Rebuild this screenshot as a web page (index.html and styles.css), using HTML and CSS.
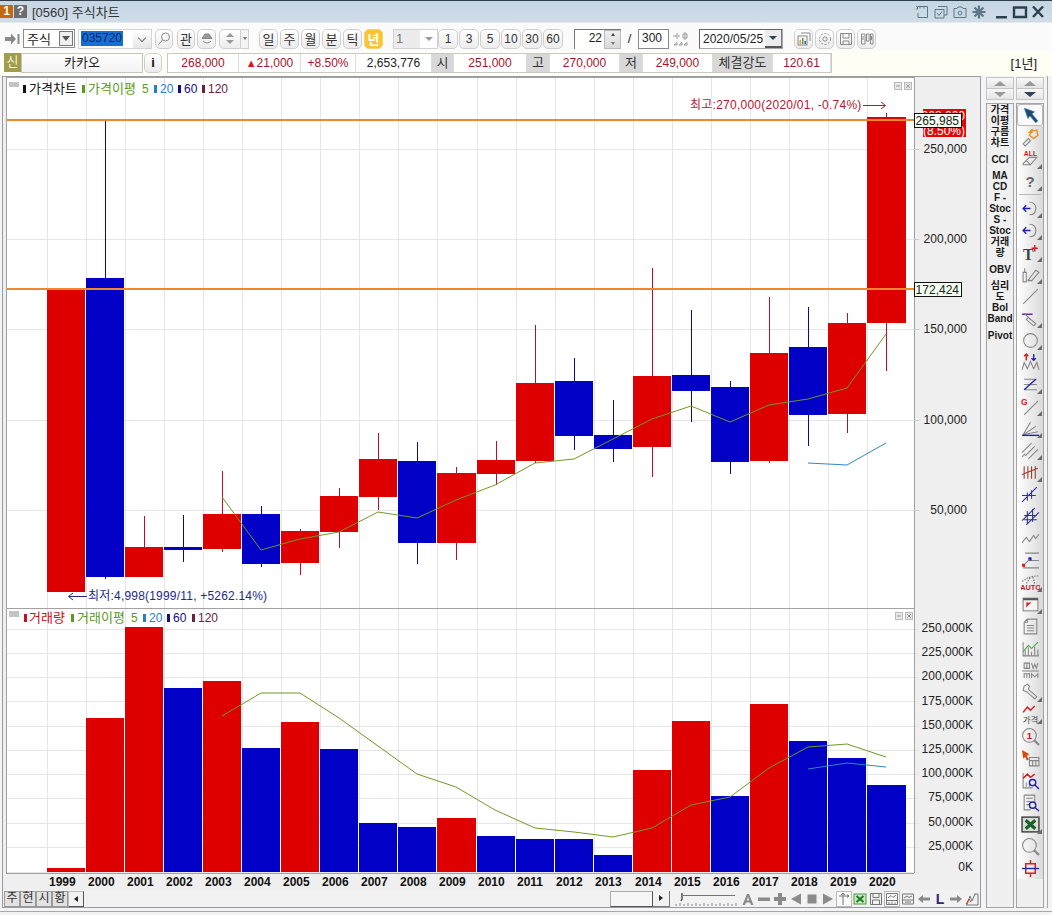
FILE: index.html
```html
<!DOCTYPE html>
<html lang="ko">
<head>
  <meta charset="UTF-8">
  <title>[0560] 주식차트</title>
  <link rel="stylesheet" href="styles.css">
</head>
<body>
<div class="window">

  <!-- title bar -->
  <div class="titlebar">
    <span class="num-badge">1</span>
    <span class="help-badge">?</span>
    <span class="title-text">[0560] 주식차트</span>
    <div class="title-tools">
      <svg class="tt" viewBox="0 0 14 14"><path d="M3 1.5H12.5V12.5H3V8M1 1.5H2.5V4H1M5 1.5V3.5M9 1.5V3.5"/></svg>
      <svg class="tt" viewBox="0 0 14 14"><path d="M4 1.5H13V10H10M1 4.5H10V13H1ZM3 8L5 10.5 8 6.5"/></svg>
      <svg class="tt" viewBox="0 0 14 14"><path d="M1 3.5H4L5 2H9L10 3.5H13V12.5H1Z"/><circle cx="7" cy="8" r="2"/></svg>
      <svg class="tt gear" viewBox="0 0 14 14"><path d="M7 0.5V13.5M0.5 7H13.5M2.5 2.5L11.5 11.5M11.5 2.5L2.5 11.5"/></svg>
    </div>
    <div class="win-ctrl">
      <svg class="wc" viewBox="0 0 16 16"><rect x="2" y="12" width="11" height="2.5"/></svg>
      <svg class="wc" viewBox="0 0 16 16"><path class="wc-line" d="M2 3.5H14V13H2Z"/></svg>
      <svg class="wc" viewBox="0 0 16 16"><path class="wc-line" d="M3 2.5L13 13M13 2.5L3 13"/></svg>
    </div>
  </div>

  <!-- toolbar -->
  <div class="toolbar">
    <svg class="send-icon" viewBox="0 0 15 14"><path d="M0 5H6V1.5L11 7 6 12.5V9H0Z"/><rect x="12.5" y="2" width="2" height="10"/></svg>
    <div class="combo market"><span>주식</span><i class="combo-arrow"></i></div>
    <div class="code-box"><span class="code-sel">035720</span><i class="code-arrow"></i></div>
    <button class="btn w18 ml3"><svg class="bi" viewBox="0 0 14 14"><circle cx="8.5" cy="5" r="4"/><path d="M5.5 8L1.5 12.5"/></svg></button>
    <button class="btn w18 ml4">관</button>
    <button class="btn w19 ml2 round-grey"><svg class="bi" viewBox="0 0 14 14"><path class="fill-grey" d="M2 6.5H12L9 2H5Z"/><path d="M3 9Q7 13 11 9"/></svg></button>
    <div class="updown ml3"><i class="tri-up"></i><i class="tri-dn"></i></div>
    <div class="mini-dd"><i class="tri-dn small"></i></div>

    <div class="period ml10">
      <button class="btn w19">일</button>
      <button class="btn w19">주</button>
      <button class="btn w19">월</button>
      <button class="btn w19">분</button>
      <button class="btn w19">틱</button>
      <button class="btn w19 active">년</button>
    </div>

    <div class="unit-select ml10"><span>1</span><i class="tri-dn"></i></div>
    <div class="minutes">
      <button class="btn w20">1</button>
      <button class="btn w20">3</button>
      <button class="btn w20">5</button>
      <button class="btn w20">10</button>
      <button class="btn w20">30</button>
      <button class="btn w20">60</button>
    </div>

    <div class="spin ml11"><span class="spin-val">22</span><div class="spin-btns"><i class="tri-up small"></i><i class="tri-dn small"></i></div></div>
    <span class="slash">/</span>
    <div class="count-box">300</div>
    <svg class="count-icon" viewBox="0 0 16 16"><path d="M1 5H5M5 2V8M8 5H6M11 3H15V7H11ZM13 1V9M2 14L5 11.5V14ZM7 14L10 11.5V14ZM12 14L15 11.5V14Z"/></svg>
    <div class="date-box ml11"><span>2020/05/25</span><b class="date-arrow"><i class="tri-dn dark"></i></b></div>

    <button class="btn w19 ml11"><svg class="bi" viewBox="0 0 14 14"><path d="M4 1H13V9"/><rect x="1" y="4" width="9" height="9"/><rect class="b-o" x="2.5" y="8" width="1.5" height="4"/><rect class="b-g" x="5" y="6" width="1.5" height="6"/><rect class="b-b" x="7.5" y="9" width="1.5" height="3"/></svg></button>
    <button class="btn w19 ml2"><svg class="bi" viewBox="0 0 14 14"><circle cx="7" cy="7" r="2.2"/><circle cx="7" cy="7" r="5.5" stroke-dasharray="2 1.5"/></svg></button>
    <button class="btn w19 ml2"><svg class="bi" viewBox="0 0 14 14"><path d="M1.5 1.5H12.5V12.5H1.5ZM4 1.5V6H10V1.5M4 12.5V9H10V12.5"/></svg></button>
    <button class="btn w19 ml2"><svg class="bi" viewBox="0 0 14 14"><path d="M1.5 2H5V12H1.5ZM6.5 2H9V9H6.5ZM10.5 2H13V12H10.5ZM3 4V8M11.5 4V8"/></svg></button>
  </div>

  <!-- stock info row -->
  <div class="infobar">
    <span class="shin">신</span>
    <div class="stock-name">카카오</div>
    <button class="btn info-btn">i</button>
    <div class="quote">
      <span class="up">268,000</span>
      <span class="up"><em class="tri-red">▲</em>21,000</span>
      <span class="up">+8.50%</span>
      <span>2,653,776</span>
      <span class="lbl">시</span>
      <span class="up">251,000</span>
      <span class="lbl">고</span>
      <span class="up">270,000</span>
      <span class="lbl">저</span>
      <span class="up">249,000</span>
      <span class="lbl">체결강도</span>
      <span class="up">120.61</span>
    </div>
    <span class="range">[1년]</span>
  </div>

  <div class="content">
    <div class="frame">
      <svg class="chart" width="974" height="813" viewBox="6 77 974 813">
        <!-- panels -->
        <rect class="plot" x="7" y="78" width="907" height="530"/>
        <rect class="plot" x="7" y="609" width="907" height="264"/>

        <!-- grid -->
        <path class="grid" d="M47.5 78V873M86.5 78V876M125.5 78V876M164.5 78V876M203.5 78V876M242.5 78V876M281.5 78V876M320.5 78V876M359.5 78V876M398.5 78V876M437.5 78V876M477.5 78V876M516.5 78V876M555.5 78V876M594.5 78V876M633.5 78V876M672.5 78V876M711.5 78V876M750.5 78V876M789.5 78V876M828.5 78V876M867.5 78V876"/>
        <path class="grid" d="M7 149.5H919M7 239.5H919M7 329.5H919M7 420.5H919M7 510.5H919"/>
        <path class="grid" d="M7 629.5H919M7 653.5H919M7 677.5H919M7 701.5H919M7 726.5H919M7 750.5H919M7 774.5H919M7 798.5H919M7 823.5H919M7 847.5H919M7 872.5H919"/>
        <path class="frame-line" d="M6.5 77V873M6 77.5H914M6 608.5H914M914.5 77V873M6 873.5H914"/>

        <!-- price wicks -->
        <path class="wick-up" d="M144.5 516V547M222.5 471V552M300.5 529V575M339.5 488V548M378.5 433V510M456.5 467V560M496.5 441V485M535.5 325V463M652.5 268V477M769.5 297V463M847.5 313V433M886.5 113V371"/>
        <path class="wick-dn" d="M105.5 121V579M183.5 515V562M261.5 506V567M417.5 442V564M574.5 358V450M613.5 400V462M691.5 310V422M730.5 381V474M808.5 307V446"/>

        <!-- price candles -->
        <g class="up">
          <rect x="47" y="289" width="38" height="303"/>
          <rect x="125" y="547" width="38" height="30"/>
          <rect x="203" y="514" width="38" height="35"/>
          <rect x="281" y="531" width="38" height="32"/>
          <rect x="320" y="496" width="38" height="36"/>
          <rect x="359" y="459" width="38" height="38"/>
          <rect x="437" y="473" width="39" height="70"/>
          <rect x="477" y="460" width="38" height="14"/>
          <rect x="516" y="383" width="38" height="78"/>
          <rect x="633" y="376" width="38" height="71"/>
          <rect x="750" y="353" width="38" height="108"/>
          <rect x="828" y="323" width="38" height="91"/>
          <rect x="867" y="117" width="39" height="206"/>
        </g>
        <g class="dn">
          <rect x="86" y="278" width="38" height="299"/>
          <rect x="164" y="547" width="38" height="3"/>
          <rect x="242" y="514" width="38" height="50"/>
          <rect x="398" y="461" width="38" height="82"/>
          <rect x="555" y="381" width="38" height="55"/>
          <rect x="594" y="435" width="38" height="14"/>
          <rect x="672" y="375" width="38" height="16"/>
          <rect x="711" y="387" width="38" height="75"/>
          <rect x="789" y="347" width="38" height="68"/>
        </g>

        <!-- price moving averages -->
        <polyline class="ma5" points="222,497 261,550 300,539 339,532 378,512 417,518 456,500 495,485 535,463 574,459 613,439 652,419 691,406 730,422 769,405 808,399 847,388 886,334"/>
        <polyline class="ma20" points="808,463 847,465 886,443"/>

        <!-- volume bars -->
        <g class="up">
          <rect x="47" y="868" width="38" height="4"/>
          <rect x="86" y="718" width="38" height="154"/>
          <rect x="125" y="627" width="38" height="245"/>
          <rect x="203" y="681" width="38" height="191"/>
          <rect x="281" y="722" width="38" height="150"/>
          <rect x="437" y="818" width="39" height="54"/>
          <rect x="633" y="770" width="38" height="102"/>
          <rect x="672" y="721" width="38" height="151"/>
          <rect x="750" y="704" width="38" height="168"/>
        </g>
        <g class="dn">
          <rect x="164" y="688" width="38" height="184"/>
          <rect x="242" y="748" width="38" height="124"/>
          <rect x="320" y="749" width="38" height="123"/>
          <rect x="359" y="823" width="38" height="49"/>
          <rect x="398" y="827" width="38" height="45"/>
          <rect x="477" y="836" width="38" height="36"/>
          <rect x="516" y="839" width="38" height="33"/>
          <rect x="555" y="839" width="38" height="33"/>
          <rect x="594" y="855" width="38" height="17"/>
          <rect x="711" y="796" width="38" height="76"/>
          <rect x="789" y="741" width="38" height="131"/>
          <rect x="828" y="758" width="38" height="114"/>
          <rect x="867" y="785" width="39" height="87"/>
        </g>
        <polyline class="ma5" points="222,716 261,693 300,693 339,718 378,746 417,774 456,787 495,810 535,828 574,832 613,837 652,828 691,805 730,797 769,768 808,747 847,744 886,757"/>
        <polyline class="ma20" points="808,769 847,763 886,767"/>

        <!-- axis ticks -->
        <path class="tick" d="M914 149.5H919M914 239.5H919M914 329.5H919M914 420.5H919M914 510.5H919"/>

        <!-- current price tag behind support lines -->
        <rect class="now-tag" x="923" y="109" width="43" height="28"/>
        <text class="t-now" x="965" y="120">268,000</text>
        <text class="t-now" x="965" y="135">(8.50%)</text>

        <!-- trend lines -->
        <rect class="trend" x="7" y="119" width="908" height="2"/>
        <rect class="trend" x="7" y="288" width="908" height="2"/>
        <rect class="line-tag" x="914.5" y="113.5" width="47" height="14"/>
        <text class="t-axis" x="959" y="125">265,985</text>
        <rect class="line-tag" x="914.5" y="282.5" width="47" height="14"/>
        <text class="t-axis" x="959" y="294">172,424</text>

        <!-- price axis -->
        <text class="t-axis" x="967" y="153">250,000</text>
        <text class="t-axis" x="967" y="243">200,000</text>
        <text class="t-axis" x="967" y="333">150,000</text>
        <text class="t-axis" x="967" y="424">100,000</text>
        <text class="t-axis" x="967" y="514">50,000</text>

        <!-- volume axis -->
        <text class="t-axis" x="973" y="632">250,000K</text>
        <text class="t-axis" x="973" y="656">225,000K</text>
        <text class="t-axis" x="973" y="680">200,000K</text>
        <text class="t-axis" x="973" y="705">175,000K</text>
        <text class="t-axis" x="973" y="729">150,000K</text>
        <text class="t-axis" x="973" y="753">125,000K</text>
        <text class="t-axis" x="973" y="777">100,000K</text>
        <text class="t-axis" x="973" y="801">75,000K</text>
        <text class="t-axis" x="973" y="826">50,000K</text>
        <text class="t-axis" x="973" y="850">25,000K</text>
        <text class="t-axis" x="973" y="871">0K</text>

        <!-- years -->
        <g class="t-year">
          <text x="49" y="886">1999</text><text x="88" y="886">2000</text><text x="127" y="886">2001</text>
          <text x="166" y="886">2002</text><text x="205" y="886">2003</text><text x="244" y="886">2004</text>
          <text x="283" y="886">2005</text><text x="322" y="886">2006</text><text x="361" y="886">2007</text>
          <text x="400" y="886">2008</text><text x="439" y="886">2009</text><text x="478" y="886">2010</text>
          <text x="517" y="886">2011</text><text x="556" y="886">2012</text><text x="595" y="886">2013</text>
          <text x="635" y="886">2014</text><text x="674" y="886">2015</text><text x="713" y="886">2016</text>
          <text x="752" y="886">2017</text><text x="791" y="886">2018</text><text x="830" y="886">2019</text>
          <text x="869" y="886">2020</text>
        </g>

        <!-- high / low notes -->
        <text class="t-high" x="690" y="109">최고:270,000(2020/01, -0.74%)</text>
        <path class="arr-high" d="M863 105.5H885M881 102L885.5 105.5 881 109"/>
        <path class="arr-low" d="M87 596.5H69M73 593L68.5 596.5 73 600"/>
        <text class="t-low" x="88" y="600">최저:4,998(1999/11, +5262.14%)</text>

        <!-- price legend -->
        <rect class="pane-grip" x="9" y="82" width="10" height="5"/>
        <rect class="c-black" x="23" y="85" width="3" height="8"/>
        <text class="t-leg c-black" x="29" y="93">가격차트</text>
        <rect class="c-green" x="82" y="85" width="3" height="8"/>
        <text class="t-leg c-green" x="88" y="93">가격이평</text>
        <text class="t-num c-green" x="142" y="93">5</text>
        <rect class="c-sky" x="154" y="85" width="3" height="8"/>
        <text class="t-num c-sky" x="160" y="93">20</text>
        <rect class="c-navy" x="178" y="85" width="3" height="8"/>
        <text class="t-num c-navy" x="184" y="93">60</text>
        <rect class="c-plum" x="202" y="85" width="3" height="8"/>
        <text class="t-num c-plum" x="208" y="93">120</text>

        <!-- volume legend -->
        <rect class="pane-grip" x="9" y="611" width="10" height="6"/>
        <rect class="c-red" x="24" y="614" width="3" height="8"/>
        <text class="t-leg c-red" x="29" y="622">거래량</text>
        <rect class="c-green" x="71" y="614" width="3" height="8"/>
        <text class="t-leg c-green" x="77" y="622">거래이평</text>
        <text class="t-num c-green" x="131" y="622">5</text>
        <rect class="c-sky" x="143" y="614" width="3" height="8"/>
        <text class="t-num c-sky" x="149" y="622">20</text>
        <rect class="c-navy" x="167" y="614" width="3" height="8"/>
        <text class="t-num c-navy" x="173" y="622">60</text>
        <rect class="c-plum" x="192" y="614" width="3" height="8"/>
        <text class="t-num c-plum" x="198" y="622">120</text>

        <!-- pane buttons -->
        <g class="pane-btn"><rect x="894.5" y="82.5" width="7" height="7"/><path d="M896 86H900"/><rect x="904.5" y="82.5" width="7" height="7"/><path d="M906 84L910 88M910 84L906 88"/></g>
        <g class="pane-btn"><rect x="895.5" y="612.5" width="7" height="7"/><path d="M897 616H901"/><rect x="905.5" y="612.5" width="7" height="7"/><path d="M907 614L911 618M911 614L907 618"/></g>
      </svg>

      <!-- bottom strip -->
      <div class="bottom-bar">
        <div class="tabs">
          <span class="tab">주</span><span class="tab">현</span><span class="tab">시</span><span class="tab">황</span>
          <span class="tab-arrow"><i class="tri-left"></i></span>
        </div>
        <div class="scroll-box"></div>
        <div class="scroll-btn"><i class="tri-right"></i></div>
        <svg class="zoom-slider" width="62" height="16" viewBox="0 0 62 16">
          <path d="M8 4.5H60" class="sl-rail"/>
          <path d="M7 2V8L6 10" class="sl-knob"/>
          <path d="M1 15V13M5 15V12M9 15V13M13 15V12M17 15V13M21 15V12M25 15V13M29 15V12M33 15V13M37 15V12M41 15V13M45 15V12M49 15V13M53 15V12M57 15V13M61 15V12" class="sl-scale"/>
        </svg>
        <div class="bar-icons">
          <svg class="bbi" viewBox="0 0 14 14"><path class="f-grey" d="M6 2H8L12.5 13H10L9 10.5H5L4 13H1.5ZM7 5L5.8 8.5H8.2Z"/></svg>
          <svg class="bbi" viewBox="0 0 14 14"><rect class="f-grey" x="1" y="5.5" width="12" height="3.5"/></svg>
          <svg class="bbi" viewBox="0 0 14 14"><path class="f-grey" d="M5 1H9V5H13V9H9V13H5V9H1V5H5Z"/></svg>
          <svg class="bbi" viewBox="0 0 14 14"><path class="f-grey" d="M12 1.5V12.5L2 7Z"/></svg>
          <svg class="bbi" viewBox="0 0 14 14"><rect class="f-grey" x="2.5" y="2.5" width="9" height="9"/></svg>
          <svg class="bbi" viewBox="0 0 14 14"><path class="f-grey" d="M2 1.5V12.5L12 7Z"/></svg>
          <svg class="bbi boxed" viewBox="0 0 14 14"><path class="s-grey" d="M6 1V13M2 4H12M6 1L4 3M6 1L8 3M12 4L10 2.5M12 4L10 5.5"/></svg>
          <svg class="bbi" viewBox="0 0 14 14"><rect class="xl-bg" x="1" y="2" width="12" height="10"/><path class="xl-x" d="M3.5 4L10.5 10M10.5 4L3.5 10"/></svg>
          <svg class="bbi" viewBox="0 0 14 14"><path class="s-grey" d="M1.5 1.5H12.5V12.5H1.5ZM4 1.5V5.5H10V1.5M3.5 8H10.5V12.5H3.5Z"/></svg>
          <svg class="bbi boxed" viewBox="0 0 14 14"><path class="s-grey" d="M1.5 1.5H12.5V12.5H1.5ZM1.5 8.5H12.5M3 6L6 3.5 8 5.5 11 3M4 12V10M7 12V9.5M10 12V10.5"/></svg>
          <svg class="bbi" viewBox="0 0 14 14"><path class="s-grey" d="M1.5 2H12.5V12H1.5ZM1.5 8H12.5M3 6L6 4 8 5.5 11 4M4 10H10"/></svg>
          <svg class="bbi" viewBox="0 0 14 14"><path class="f-grey" d="M1 7L6 3V5.5H13V8.5H6V11Z"/></svg>
          <span class="bbi l-mark">L</span>
          <svg class="bbi" viewBox="0 0 14 14"><path class="f-grey" d="M13 7L8 3V5.5H1V8.5H8V11Z"/></svg>
          <svg class="bbi" viewBox="0 0 14 14"><path class="s-grey" d="M1 13H13M2 13L5 4 7 9 10 2M9 2H13V13"/><path class="s-red" d="M1 12L4 7 6 10"/></svg>
        </div>
      </div>
    </div>

    <!-- right side panels -->
    <div class="side-col study-col">
      <div class="side-scroll">
        <span class="sc-btn"><i class="tri-up"></i></span>
        <span class="sc-btn"><i class="tri-dn"></i></span>
      </div>
      <div class="side-list">
        <div class="study">가격<br>이평</div>
        <div class="study">구름<br>차트</div>
        <div class="study">CCI</div>
        <div class="study">MA<br>CD</div>
        <div class="study">F -<br>Stoc</div>
        <div class="study">S -<br>Stoc</div>
        <div class="study">거래<br>량</div>
        <div class="study">OBV</div>
        <div class="study">심리<br>도</div>
        <div class="study">Bol<br>Band</div>
        <div class="study">Pivot</div>
      </div>
    </div>

    <div class="side-col tool-col">
      <div class="side-scroll">
        <span class="sc-btn"><i class="tri-up"></i></span>
        <span class="sc-btn"><i class="tri-dn dark"></i></span>
      </div>
      <div class="side-list tools">
        <div class="tool pressed"><svg viewBox="0 0 18 18"><path class="f-teal" d="M3 2L13 5.5 10.5 7.5 16 14 14 16 8.5 9.5 6.5 12Z"/></svg></div>
        <div class="tool"><svg viewBox="0 0 18 18"><path class="s-orange" d="M10 3L15 2 16 7 12 10 8 7ZM11 1L8 4 11 4"/><path class="s-dk" d="M2 15L7 10 9 12 4 17Z"/></svg></div>
        <div class="tool more"><svg viewBox="0 0 18 18"><text class="t-all" x="9" y="5.5">ALL</text><path class="s-dk" d="M2 13L8 7H15L9 14H2ZM5 10L9 14"/></svg></div>
        <div class="tool more"><span class="q-mark">?</span></div>
        <div class="tool-sep"></div>
        <div class="tool more"><svg viewBox="0 0 18 18"><path class="s-dk" d="M8 3Q14 3 14 9T8 15"/><path class="s-navy2" d="M2 9H9M5 6L2 9 5 12"/></svg></div>
        <div class="tool more"><svg viewBox="0 0 18 18"><path class="s-dk" d="M8 3Q14 3 14 9T8 15"/><path class="s-navy2" d="M2 9H9M5 6L2 9 5 12"/></svg></div>
        <div class="tool more"><svg viewBox="0 0 18 18"><text class="t-serif" x="2" y="16">T</text><path class="s-red2" d="M10 5H16M13 2V8"/></svg></div>
        <div class="tool more"><svg viewBox="0 0 18 18"><path class="s-dk" d="M2 7H5V16H2ZM3.5 3V7M7 14L14 5 17 7 10 15ZM6 15H11"/></svg></div>
        <div class="tool"><svg viewBox="0 0 18 18"><path class="s-dk" d="M2 16L16 2"/></svg></div>
        <div class="tool more"><svg viewBox="0 0 18 18"><path class="s-purple" d="M1 5H11"/><path class="s-dk" d="M7 8L14 14 12 16 5 10ZM3 4L9 10"/></svg></div>
        <div class="tool more"><svg viewBox="0 0 18 18"><circle class="s-dk" cx="9" cy="9" r="6.5"/></svg></div>
        <div class="tool"><svg viewBox="0 0 18 18"><path class="s-dk" d="M1 16L3 9 6 15 9 8 12 15 15 9 17 16"/><path class="s-red2" d="M5 1V7M3 3L5 1 7 3"/><path class="s-navy2" d="M12 1V7M10 5L12 7 14 5"/></svg></div>
        <div class="tool more"><svg viewBox="0 0 18 18"><path class="s-dk" d="M3 4H15M3 9H15M3 14H15"/><path class="s-navy2" d="M3 14L14 4"/></svg></div>
        <div class="tool more"><svg viewBox="0 0 18 18"><path class="s-dk" d="M3 17L16 4"/><text class="t-g" x="0" y="8">G</text></svg></div>
        <div class="tool more"><svg viewBox="0 0 18 18"><path class="s-dk" d="M2 15L9 3M2 15L14 7M2 15L16 12"/><path class="s-navy2" d="M1 15.5H17"/></svg></div>
        <div class="tool more"><svg viewBox="0 0 18 18"><path class="s-dk" d="M1 11L10 2M4 14L13 5M7 17L16 8M1 15L4 12"/></svg></div>
        <div class="tool more"><svg viewBox="0 0 18 18"><path class="s-brown" d="M3 3V15M6.5 3V15M10 3V15M13.5 3V15M1 11L16 5"/></svg></div>
        <div class="tool"><svg viewBox="0 0 18 18"><path class="s-navy3" d="M1 16L15 2M1 10L14 10M6 7V15M10 5V13"/></svg></div>
        <div class="tool"><svg viewBox="0 0 18 18"><path class="s-navy3" d="M1 13L13 1M5 17L17 5M3 8H15M3 12H15M6 4V16M11 2V14"/></svg></div>
        <div class="tool"><svg viewBox="0 0 18 18"><path class="s-dk" d="M1 13L5 8 8 12 12 6 14 9 17 5"/></svg></div>
        <div class="tool"><svg viewBox="0 0 18 18"><path class="s-dk" d="M4 2H17M7 9H17M2 16H17"/><rect class="f-navy" x="7" y="6" width="3" height="3"/><rect class="f-red" x="1" y="12" width="3" height="3"/><path class="s-dk" d="M4 12L8 8"/></svg></div>
        <div class="tool more"><svg viewBox="0 0 18 18"><path class="s-dots" d="M1 8Q9 2 17 3M5 10L9 4M13 10L11 3"/><text class="t-auto" x="9" y="16">AUTO</text></svg></div>
        <div class="tool more"><svg viewBox="0 0 18 18"><rect class="f-lt s-dk" x="2" y="3" width="14" height="12"/><rect class="f-dk" x="2" y="3" width="14" height="2"/><path class="f-red" d="M5 7H10L7 9.5 5 12Z"/></svg></div>
        <div class="tool"><svg viewBox="0 0 18 18"><path class="s-dk" d="M6 2H15V16H3V5ZM6 2V5H3M5.5 8H12.5M5.5 10.5H12.5M5.5 13H12.5"/></svg></div>
        <div class="tool"><svg viewBox="0 0 18 18"><path class="s-dk" d="M2 3V16H17M4 16V11M7 16V8M10 16V12M13 16V7M16 16V10"/><path class="s-green2" d="M2 12L7 6 10 9 16 3"/></svg></div>
        <div class="tool"><svg viewBox="0 0 18 18"><path class="s-dk" d="M3 2H8V7H3ZM5.5 2V7M10 2L11.5 7 13 3 14.5 7 16 2M1 9.5H17M3 16V12H8V16M5.5 12V16M10 16V12L13 15 16 12V16"/></svg></div>
        <div class="tool more"><svg viewBox="0 0 18 18"><path class="s-dk" d="M3 3L6 1 8 3 7 6 15 13 13 15 5 8 2 7Z"/></svg></div>
        <div class="tool more"><svg viewBox="0 0 18 18"><path class="s-red2" d="M2 7L6 2 9 5 13 1"/><text class="t-ga" x="9" y="17">가격</text></svg></div>
        <div class="tool"><svg viewBox="0 0 18 18"><circle class="s-dk" cx="8" cy="8" r="6.5"/><path class="s-dk2" d="M12.5 12.5L17 17"/><text class="t-one" x="8" y="11.5">1</text></svg></div>
        <div class="tool"><svg viewBox="0 0 18 18"><path class="f-cursor" d="M1 1L8 5 5.5 6.5 7.5 10 5.5 11 4 7.5 2 9Z"/><path class="s-dk" d="M8 8H17V16H8ZM8 11H17M11 11V16M14 11V16"/></svg></div>
        <div class="tool"><svg viewBox="0 0 18 18"><path class="s-dk" d="M2 2V16H11M5 15V11M8 15V9"/><path class="s-red2" d="M2 7L6 3 9 6 13 3"/><circle class="s-navy2" cx="11" cy="11" r="3"/><path class="s-navy2" d="M13 13L17 17"/></svg></div>
        <div class="tool"><svg viewBox="0 0 18 18"><path class="s-dk" d="M3 2H13V9M3 2V16H9M5 5H11M5 8H9M5 11H8"/><circle class="s-navy2" cx="11" cy="11.5" r="3"/><path class="s-navy2" d="M13 13.5L17 17"/></svg></div>
        <div class="tool more"><svg viewBox="0 0 18 18"><rect class="xl-frame" x="1" y="2" width="16" height="14"/><path class="xl-big" d="M4.5 5L13.5 13M13.5 5L4.5 13"/></svg></div>
        <div class="tool"><svg viewBox="0 0 18 18"><circle class="s-dk" cx="8" cy="8" r="6.5"/><path class="s-dk2" d="M12.5 12.5L17 17"/></svg></div>
        <div class="tool"><svg viewBox="0 0 18 18"><rect class="s-red2" x="4.5" y="4.5" width="9" height="9"/><path class="s-red2" d="M9 1V4.5M9 13.5V17"/><path class="s-navy2" d="M1 9H17"/></svg></div>
      </div>
    </div>
    <div class="side-edge"></div>
  </div>
</div>
</body>
</html>
```

FILE: styles.css
```css
* {
  box-sizing: border-box;
}

body {
  margin: 0;
  background-color: #f4f4f4;
  font-family: "Liberation Sans", "Noto Sans CJK KR", sans-serif;
  font-size: 12px;
  color: #222;
}

button {
  font-family: inherit;
  padding: 0;
}

i {
  display: block;
}

.window {
  width: 1052px;
  height: 915px;
  overflow: hidden;
  border-top: 1px solid #2f3d49;
}

/* title bar */
.titlebar {
  height: 21px;
  display: flex;
  align-items: center;
  background: linear-gradient(#c6d5e2, #d0dde9);
}

.num-badge,
.help-badge {
  width: 13px;
  height: 13px;
  color: #fff;
  font-weight: bold;
  font-size: 12px;
  line-height: 13px;
  text-align: center;
}

.num-badge { background-color: #c46a0e; }
.help-badge { background-color: #6d6d6d; margin-left: 1px; }

.title-text {
  margin-left: 5px;
  font-size: 13px;
  color: #333;
}

.title-tools {
  margin-left: auto;
  display: flex;
  gap: 5px;
  margin-right: 8px;
}

.tt {
  width: 14px;
  height: 14px;
  fill: none;
  stroke: #5d7688;
  stroke-width: 1;
}

.tt.gear {
  stroke-width: 2.2;
}

.win-ctrl {
  display: flex;
  gap: 2px;
  margin-right: 6px;
}

.wc {
  width: 16px;
  height: 16px;
  fill: #2c3f4f;
}

.wc-line {
  fill: none;
  stroke: #2c3f4f;
  stroke-width: 2.4;
}

/* toolbar */
.toolbar {
  height: 29px;
  display: flex;
  align-items: center;
  padding-top: 3px;
  padding-left: 5px;
  background-color: #fbfbfb;
  border-top: 1px solid #e6eaee;
}

.send-icon {
  width: 15px;
  height: 14px;
  fill: #8a8a8a;
}

.btn {
  height: 20px;
  display: flex;
  align-items: center;
  justify-content: center;
  flex-shrink: 0;
  border: 1px solid #cfcfcf;
  border-radius: 5px;
  background: linear-gradient(#ffffff, #ececec);
  color: #333;
  font-size: 13px;
}

.btn.active {
  background: #fbc531;
  border-color: #f0d27a;
  color: #fff;
  font-weight: bold;
}

.w18 { width: 18px; }
.w19 { width: 19px; }
.w20 { width: 20px; font-size: 12px; }
.ml2 { margin-left: 2px; }
.ml3 { margin-left: 3px; }
.ml4 { margin-left: 4px; }
.ml10 { margin-left: 10px; }
.ml11 { margin-left: 11px; }

.bi {
  width: 14px;
  height: 14px;
  fill: none;
  stroke: #8a8a8a;
  stroke-width: 1;
}

.fill-grey { fill: #999; }
.b-o { fill: #e8a030; stroke: none; }
.b-g { fill: #50a050; stroke: none; }
.b-b { fill: #3060c0; stroke: none; }

.combo {
  height: 19px;
  display: flex;
  align-items: center;
  border: 1px solid #8e8e8e;
  background-color: #fff;
  font-size: 13px;
}

.market {
  width: 52px;
  margin-left: 3px;
  padding-left: 3px;
  justify-content: space-between;
}

.combo-arrow {
  width: 14px;
  height: 15px;
  margin-right: 1px;
  border: 1px solid #777;
  background-color: #efefef;
  position: relative;
}

.combo-arrow::after {
  content: "";
  position: absolute;
  left: 2px;
  top: 4px;
  border: 4px solid transparent;
  border-top: 5px solid #555;
  border-bottom: 0;
}

.code-box {
  width: 74px;
  height: 20px;
  margin-left: 3px;
  display: flex;
  align-items: center;
  justify-content: space-between;
  border: 1px solid #d4d4d4;
  background: #fff;
}

.code-sel {
  margin-left: 2px;
  padding: 0 1px;
  background-color: #1670d2;
  color: #0a2472;
  line-height: 15px;
  font-size: 12px;
}

.code-arrow {
  width: 18px;
  height: 18px;
  background: linear-gradient(#fff, #e6e6e6);
  position: relative;
}

.code-arrow::after {
  content: "";
  position: absolute;
  left: 6px;
  top: 5px;
  width: 5px;
  height: 5px;
  border-right: 1.5px solid #777;
  border-bottom: 1.5px solid #777;
  transform: rotate(45deg);
}

.tri-up,
.tri-dn {
  width: 0;
  height: 0;
  border-left: 4px solid transparent;
  border-right: 4px solid transparent;
}

.tri-up { border-bottom: 4px solid #999; }
.tri-dn { border-top: 4px solid #999; }
.tri-up.small { border-width: 0 2px 3px; border-bottom-color: #444; }
.tri-dn.small { border-width: 3px 2px 0; border-top-color: #444; }
.tri-dn.dark { border-top-color: #33435a; }

.updown {
  width: 22px;
  height: 20px;
  display: flex;
  flex-direction: column;
  align-items: center;
  justify-content: center;
  gap: 3px;
  border: 1px solid #cfcfcf;
  border-radius: 5px 0 0 5px;
  background: linear-gradient(#fff, #ececec);
}

.mini-dd {
  width: 8px;
  height: 20px;
  display: flex;
  align-items: center;
  justify-content: center;
  border: 1px solid #cfcfcf;
  border-left: 0;
  background: #f4f4f4;
}

.tri-dn.small {
  border-top-color: #777;
}

.period,
.minutes {
  display: flex;
  gap: 2px;
}

.minutes {
  gap: 1px;
}

.unit-select {
  width: 45px;
  height: 20px;
  display: flex;
  align-items: center;
  background: #fff;
  border: 1px solid #d2d2d2;
}

.unit-select span {
  width: 26px;
  height: 18px;
  padding-left: 2px;
  background-color: #ececec;
  color: #777;
  font-size: 13px;
  line-height: 18px;
  margin-right: 5px;
}

.spin {
  width: 47px;
  height: 20px;
  display: flex;
  border-top: 1px solid #777;
  border-left: 1px solid #777;
  background: #fff;
}

.spin-val {
  flex: 1;
  padding-right: 2px;
  text-align: right;
  line-height: 16px;
}

.spin-btns {
  width: 17px;
  display: flex;
  flex-direction: column;
  align-items: center;
  justify-content: space-around;
  background: linear-gradient(#efefef, #d8d8d8);
  border: 1px solid #bbb;
}

.slash {
  width: 17px;
  text-align: center;
  font-size: 13px;
}

.count-box {
  width: 31px;
  height: 20px;
  padding-left: 3px;
  border: 1px solid #888;
  background: #fff;
  line-height: 17px;
}

.count-icon {
  width: 16px;
  height: 16px;
  margin-left: 3px;
  fill: none;
  stroke: #999;
}

.date-box {
  width: 84px;
  height: 20px;
  display: flex;
  align-items: center;
  justify-content: space-between;
  padding-left: 3px;
  border: 1px solid #a8a8a8;
  border-top-color: #666;
  border-left-color: #666;
  background: #fff;
}

.date-arrow {
  width: 17px;
  height: 18px;
  display: flex;
  align-items: center;
  justify-content: center;
  background: #ececec;
  border-right: 1px solid #777;
  border-bottom: 2px solid #555;
}

/* info row */
.infobar {
  height: 25px;
  display: flex;
  align-items: center;
  padding-left: 4px;
  padding-bottom: 2px;
  background-color: #fefef4;
}

.shin {
  width: 17px;
  height: 19px;
  background-color: #a19c4e;
  color: #f4f4d0;
  font-size: 13px;
  line-height: 18px;
  text-align: center;
}

.stock-name {
  width: 122px;
  height: 20px;
  border: 1px solid #c4c4c4;
  background: linear-gradient(#fff, #f3f3f3);
  font-size: 13px;
  line-height: 17px;
  text-align: center;
}

.info-btn {
  width: 18px;
  margin-left: 1px;
  font-weight: bold;
  font-size: 13px;
  color: #111;
}

.quote {
  height: 20px;
  margin-left: 5px;
  display: grid;
  grid-template-columns: 71px 62px 55px 76px 22px 73px 23px 70px 23px 70px 60px 58px;
  border: 1px solid #c8c8c8;
  background: #fff;
}

.quote span {
  display: flex;
  align-items: center;
  justify-content: center;
  border-right: 1px solid #dcdcdc;
  line-height: 18px;
}

.quote .up { color: #a5142c; }

.quote .lbl {
  background-color: #d8d8d8;
  color: #333;
  font-size: 13px;
}

.tri-red {
  color: #d81818;
  font-style: normal;
  font-size: 11px;
}

.range {
  margin-left: auto;
  margin-right: 15px;
  font-size: 13px;
}

/* chart frame */
.content {
  height: 836px;
  display: flex;
  padding-left: 2px;
  border-bottom: 1px solid #a8a8a8;
}

.frame {
  width: 979px;
  height: 832px;
  padding-left: 3px;
  border: 1px solid #9a9aa6;
  background-color: #efefef;
}

.chart {
  display: block;
}

.plot { fill: #fff; }
.grid { fill: none; stroke: #e6e6e6; stroke-width: 1; shape-rendering: crispEdges; }
.frame-line { fill: none; stroke: #a2a2a2; stroke-width: 1; shape-rendering: crispEdges; }
.tick { fill: none; stroke: #c8c8c8; shape-rendering: crispEdges; }
.up { fill: #de0000; }
.dn { fill: #0000c6; }
.wick-up { stroke: #b80f30; fill: none; shape-rendering: crispEdges; }
.wick-dn { stroke: #0a0a96; fill: none; shape-rendering: crispEdges; }
.ma5 { fill: none; stroke: #6e9a26; stroke-width: 1; }
.ma20 { fill: none; stroke: #2f86c6; stroke-width: 1; }
.trend { fill: #f0872a; }
.now-tag { fill: #e00808; }

.t-now {
  fill: #fff;
  font-size: 12px;
  text-anchor: end;
}

.line-tag {
  fill: #f2fff0;
  stroke: #111;
  stroke-width: 1;
}

.t-axis {
  fill: #222;
  font-size: 12px;
  text-anchor: end;
}

.t-year {
  fill: #111;
  font-size: 12px;
  font-weight: bold;
}

.t-high {
  fill: #b01830;
  font-size: 12px;
  letter-spacing: 0.25px;
}

.t-low {
  fill: #1c2a86;
  font-size: 12px;
  letter-spacing: 0.2px;
}

.arr-high { fill: none; stroke: #b01830; }
.arr-low { fill: none; stroke: #1c2a86; }
.pane-grip { fill: #c4c4c4; }
.t-leg { font-size: 13px; }
.t-num { font-size: 12px; }

.c-black { fill: #111; }
.c-red { fill: #c80f20; }
.c-green { fill: #5a9a1e; }
.c-sky { fill: #2480c8; }
.c-navy { fill: #10107e; }
.c-plum { fill: #6e2040; }

.pane-btn rect { fill: #e8e8e8; stroke: #bbb; }
.pane-btn path { fill: none; stroke: #999; }

/* bottom strip */
.bottom-bar {
  width: 977px;
  height: 17px;
  margin-left: -3px;
  display: flex;
  align-items: center;
  background-color: #f2f2f2;
}

.tabs {
  display: flex;
  margin-left: 1px;
}

.tab {
  width: 16px;
  height: 16px;
  border: 1px solid #9a9a9a;
  background-color: #e2e2e2;
  color: #333;
  font-size: 12px;
  line-height: 13px;
  text-align: center;
}

.tab-arrow {
  width: 16px;
  height: 16px;
  display: flex;
  align-items: center;
  justify-content: center;
  border: 1px solid #bbb;
  border-right-color: #555;
  border-bottom-color: #555;
  background-color: #f2f2f2;
}

.tri-left {
  border: 3px solid transparent;
  border-right: 4px solid #222;
  border-left: 0;
}

.tri-right {
  border: 3px solid transparent;
  border-left: 4px solid #222;
  border-right: 0;
}

.scroll-box {
  width: 43px;
  height: 16px;
  margin-left: auto;
  border: 1px solid #aaa;
  border-right-color: #555;
  border-bottom-color: #555;
  background: #f6f6f6;
}

.scroll-btn {
  width: 17px;
  height: 16px;
  margin-right: 5px;
  display: flex;
  align-items: center;
  justify-content: center;
  border-right: 1px solid #777;
  border-bottom: 1px solid #777;
  background: #f2f2f2;
}

.zoom-slider {
  margin-right: 3px;
}

.sl-rail { stroke: #777; fill: none; }
.sl-knob { stroke: #555; fill: none; stroke-width: 1.5; }
.sl-scale { stroke: #888; fill: none; }

.bar-icons {
  display: flex;
}

.bbi {
  width: 16px;
  height: 16px;
  padding: 1px;
}

.bbi.boxed {
  border: 1px solid #bbb;
  padding: 0;
  background: #fafafa;
}

.f-grey { fill: #8a8a8a; fill-rule: evenodd; }
.s-grey { fill: none; stroke: #777; }
.s-red { fill: none; stroke: #c84030; }
.xl-bg { fill: #cfe6c4; stroke: #4c9a4c; }
.xl-x { fill: none; stroke: #1e7a1e; stroke-width: 2; }

.l-mark {
  color: #28287c;
  font-weight: bold;
  font-size: 14px;
  line-height: 15px;
  text-align: center;
}

/* right columns */
.side-col {
  width: 28px;
  height: 832px;
  display: flex;
  flex-direction: column;
}

.study-col { margin-left: 5px; }
.tool-col { margin-left: 2px; }

.side-edge {
  width: 1px;
  height: 832px;
  margin-left: 3px;
  background-color: #a8a8a8;
}

.side-scroll {
  height: 23px;
  margin-top: 1px;
  display: flex;
  flex-direction: column;
  border: 1px solid #c4c4c4;
}

.sc-btn {
  flex: 1;
  display: flex;
  align-items: center;
  justify-content: center;
  background: linear-gradient(#f8f8f8, #e4e4e4);
}

.sc-btn + .sc-btn {
  border-top: 1px solid #c4c4c4;
}

.side-scroll .tri-up,
.side-scroll .tri-dn {
  border-left-width: 6px;
  border-right-width: 6px;
  border-bottom-width: 5px;
  border-top-width: 5px;
}

.side-list {
  flex: 1;
  margin-top: 3px;
  border: 1px solid #a4a4a4;
  background-color: #f0f0f0;
}

.study {
  height: 22px;
  display: flex;
  align-items: center;
  justify-content: center;
  text-align: center;
  font-size: 10px;
  font-weight: bold;
  line-height: 11px;
  color: #1a1a1a;
}

.tool {
  height: 22px;
  position: relative;
  display: flex;
  align-items: center;
  justify-content: center;
  background: linear-gradient(90deg, #ffffff, #dadada);
}

.tool svg {
  width: 19px;
  height: 19px;
  fill: none;
}

.tool.pressed {
  border: 1px solid #b8b8b8;
  border-radius: 3px;
  background: #fafafa;
}

.tool.more::after {
  content: "";
  position: absolute;
  right: 1px;
  bottom: 1px;
  border-left: 5px solid transparent;
  border-bottom: 5px solid #6a6a6a;
}

.tool-sep {
  height: 5px;
  background: linear-gradient(90deg, #ffffff, #dadada);
  position: relative;
}

.tool-sep::after {
  content: "";
  position: absolute;
  left: 2px;
  right: 2px;
  top: 2px;
  border-top: 1px solid #b8b8b8;
}

.q-mark {
  color: #666;
  font-weight: bold;
  font-size: 15px;
}

.f-teal { fill: #1f4a72; stroke: #5a9ab0; stroke-width: 0.6; }
.f-navy { fill: #1a1ac0; }
.f-red { fill: #d82020; }
.f-lt { fill: #f6f6f6; }
.f-dk { fill: #555; }
.f-cursor { fill: #d84a10; }
.tool .s-dk { stroke: #858585; stroke-width: 1; }
.tool .s-dk2 { stroke: #858585; stroke-width: 2; }
.s-orange { stroke: #e89028; stroke-width: 1.3; }
.s-red2 { stroke: #d42020; stroke-width: 1.4; }
.s-navy2 { stroke: #2020b0; stroke-width: 1.3; }
.s-navy3 { stroke: #30309a; stroke-width: 1; }
.s-purple { stroke: #6a2aa0; stroke-width: 1.5; }
.s-brown { stroke: #9a3a28; stroke-width: 1; }
.s-green2 { stroke: #50a050; stroke-width: 1; }
.s-dots { stroke: #777; stroke-width: 1; stroke-dasharray: 1.5 1; }
.xl-frame { fill: #d6dcd6; stroke: #444; stroke-width: 1.4; }
.xl-big { stroke: #1a5e2a; stroke-width: 3; }

.t-all { fill: #d02020; font-size: 6.5px; font-weight: bold; text-anchor: middle; }
.t-serif { fill: #444; font-family: "Liberation Serif", serif; font-size: 15px; font-weight: bold; }
.t-g { fill: #d02020; font-size: 8px; font-weight: bold; }
.t-auto { fill: #c81818; font-size: 7px; font-weight: bold; text-anchor: middle; }
.t-ga { fill: #444; font-size: 8px; text-anchor: middle; }
.t-one { fill: #c02020; font-size: 9px; font-weight: bold; text-anchor: middle; }
```
